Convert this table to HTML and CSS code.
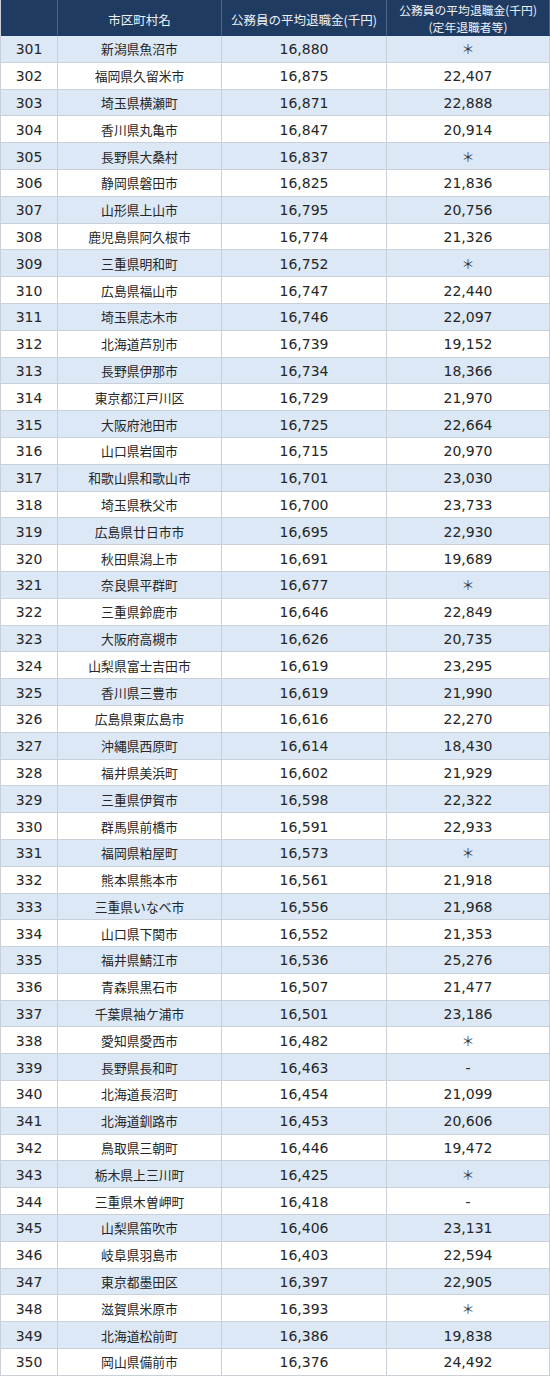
FILE: index.html
```html
<!DOCTYPE html>
<html lang="ja">
<head>
<meta charset="utf-8">
<title>公務員の平均退職金</title>
<link rel="stylesheet" href="styles.css">
</head>
<body>
<div class="table">
  <div class="row head">
    <div class="c"></div>
    <div class="c">市区町村名</div>
    <div class="c">公務員の平均退職金(千円)</div>
    <div class="c two"><span>公務員の平均退職金(千円)</span><span>(定年退職者等)</span></div>
  </div>
  <div class="row"><div class="c n">301</div><div class="c j">新潟県魚沼市</div><div class="c n">16,880</div><div class="c s">＊</div></div>
  <div class="row"><div class="c n">302</div><div class="c j">福岡県久留米市</div><div class="c n">16,875</div><div class="c n">22,407</div></div>
  <div class="row"><div class="c n">303</div><div class="c j">埼玉県横瀬町</div><div class="c n">16,871</div><div class="c n">22,888</div></div>
  <div class="row"><div class="c n">304</div><div class="c j">香川県丸亀市</div><div class="c n">16,847</div><div class="c n">20,914</div></div>
  <div class="row"><div class="c n">305</div><div class="c j">長野県大桑村</div><div class="c n">16,837</div><div class="c s">＊</div></div>
  <div class="row"><div class="c n">306</div><div class="c j">静岡県磐田市</div><div class="c n">16,825</div><div class="c n">21,836</div></div>
  <div class="row"><div class="c n">307</div><div class="c j">山形県上山市</div><div class="c n">16,795</div><div class="c n">20,756</div></div>
  <div class="row"><div class="c n">308</div><div class="c j">鹿児島県阿久根市</div><div class="c n">16,774</div><div class="c n">21,326</div></div>
  <div class="row"><div class="c n">309</div><div class="c j">三重県明和町</div><div class="c n">16,752</div><div class="c s">＊</div></div>
  <div class="row"><div class="c n">310</div><div class="c j">広島県福山市</div><div class="c n">16,747</div><div class="c n">22,440</div></div>
  <div class="row"><div class="c n">311</div><div class="c j">埼玉県志木市</div><div class="c n">16,746</div><div class="c n">22,097</div></div>
  <div class="row"><div class="c n">312</div><div class="c j">北海道芦別市</div><div class="c n">16,739</div><div class="c n">19,152</div></div>
  <div class="row"><div class="c n">313</div><div class="c j">長野県伊那市</div><div class="c n">16,734</div><div class="c n">18,366</div></div>
  <div class="row"><div class="c n">314</div><div class="c j">東京都江戸川区</div><div class="c n">16,729</div><div class="c n">21,970</div></div>
  <div class="row"><div class="c n">315</div><div class="c j">大阪府池田市</div><div class="c n">16,725</div><div class="c n">22,664</div></div>
  <div class="row"><div class="c n">316</div><div class="c j">山口県岩国市</div><div class="c n">16,715</div><div class="c n">20,970</div></div>
  <div class="row"><div class="c n">317</div><div class="c j">和歌山県和歌山市</div><div class="c n">16,701</div><div class="c n">23,030</div></div>
  <div class="row"><div class="c n">318</div><div class="c j">埼玉県秩父市</div><div class="c n">16,700</div><div class="c n">23,733</div></div>
  <div class="row"><div class="c n">319</div><div class="c j">広島県廿日市市</div><div class="c n">16,695</div><div class="c n">22,930</div></div>
  <div class="row"><div class="c n">320</div><div class="c j">秋田県潟上市</div><div class="c n">16,691</div><div class="c n">19,689</div></div>
  <div class="row"><div class="c n">321</div><div class="c j">奈良県平群町</div><div class="c n">16,677</div><div class="c s">＊</div></div>
  <div class="row"><div class="c n">322</div><div class="c j">三重県鈴鹿市</div><div class="c n">16,646</div><div class="c n">22,849</div></div>
  <div class="row"><div class="c n">323</div><div class="c j">大阪府高槻市</div><div class="c n">16,626</div><div class="c n">20,735</div></div>
  <div class="row"><div class="c n">324</div><div class="c j">山梨県富士吉田市</div><div class="c n">16,619</div><div class="c n">23,295</div></div>
  <div class="row"><div class="c n">325</div><div class="c j">香川県三豊市</div><div class="c n">16,619</div><div class="c n">21,990</div></div>
  <div class="row"><div class="c n">326</div><div class="c j">広島県東広島市</div><div class="c n">16,616</div><div class="c n">22,270</div></div>
  <div class="row"><div class="c n">327</div><div class="c j">沖縄県西原町</div><div class="c n">16,614</div><div class="c n">18,430</div></div>
  <div class="row"><div class="c n">328</div><div class="c j">福井県美浜町</div><div class="c n">16,602</div><div class="c n">21,929</div></div>
  <div class="row"><div class="c n">329</div><div class="c j">三重県伊賀市</div><div class="c n">16,598</div><div class="c n">22,322</div></div>
  <div class="row"><div class="c n">330</div><div class="c j">群馬県前橋市</div><div class="c n">16,591</div><div class="c n">22,933</div></div>
  <div class="row"><div class="c n">331</div><div class="c j">福岡県粕屋町</div><div class="c n">16,573</div><div class="c s">＊</div></div>
  <div class="row"><div class="c n">332</div><div class="c j">熊本県熊本市</div><div class="c n">16,561</div><div class="c n">21,918</div></div>
  <div class="row"><div class="c n">333</div><div class="c j">三重県いなべ市</div><div class="c n">16,556</div><div class="c n">21,968</div></div>
  <div class="row"><div class="c n">334</div><div class="c j">山口県下関市</div><div class="c n">16,552</div><div class="c n">21,353</div></div>
  <div class="row"><div class="c n">335</div><div class="c j">福井県鯖江市</div><div class="c n">16,536</div><div class="c n">25,276</div></div>
  <div class="row"><div class="c n">336</div><div class="c j">青森県黒石市</div><div class="c n">16,507</div><div class="c n">21,477</div></div>
  <div class="row"><div class="c n">337</div><div class="c j">千葉県袖ケ浦市</div><div class="c n">16,501</div><div class="c n">23,186</div></div>
  <div class="row"><div class="c n">338</div><div class="c j">愛知県愛西市</div><div class="c n">16,482</div><div class="c s">＊</div></div>
  <div class="row"><div class="c n">339</div><div class="c j">長野県長和町</div><div class="c n">16,463</div><div class="c n">-</div></div>
  <div class="row"><div class="c n">340</div><div class="c j">北海道長沼町</div><div class="c n">16,454</div><div class="c n">21,099</div></div>
  <div class="row"><div class="c n">341</div><div class="c j">北海道釧路市</div><div class="c n">16,453</div><div class="c n">20,606</div></div>
  <div class="row"><div class="c n">342</div><div class="c j">鳥取県三朝町</div><div class="c n">16,446</div><div class="c n">19,472</div></div>
  <div class="row"><div class="c n">343</div><div class="c j">栃木県上三川町</div><div class="c n">16,425</div><div class="c s">＊</div></div>
  <div class="row"><div class="c n">344</div><div class="c j">三重県木曽岬町</div><div class="c n">16,418</div><div class="c n">-</div></div>
  <div class="row"><div class="c n">345</div><div class="c j">山梨県笛吹市</div><div class="c n">16,406</div><div class="c n">23,131</div></div>
  <div class="row"><div class="c n">346</div><div class="c j">岐阜県羽島市</div><div class="c n">16,403</div><div class="c n">22,594</div></div>
  <div class="row"><div class="c n">347</div><div class="c j">東京都墨田区</div><div class="c n">16,397</div><div class="c n">22,905</div></div>
  <div class="row"><div class="c n">348</div><div class="c j">滋賀県米原市</div><div class="c n">16,393</div><div class="c s">＊</div></div>
  <div class="row"><div class="c n">349</div><div class="c j">北海道松前町</div><div class="c n">16,386</div><div class="c n">19,838</div></div>
  <div class="row"><div class="c n">350</div><div class="c j">岡山県備前市</div><div class="c n">16,376</div><div class="c n">24,492</div></div>
</div>
</body>
</html>
```

FILE: styles.css
```css
* { box-sizing: border-box; }
html, body { margin: 0; padding: 0; background: #ffffff; }
body {
  width: 550px;
  font-family: "DejaVu Sans", "Noto Sans CJK JP", sans-serif;
  color: #262626;
}
.table {
  width: 550px;
  height: 1376px;
  display: flex;
  flex-direction: column;
  border-left: 1px solid #c9d0d8;
}
.row {
  flex: 1 1 0;
  display: grid;
  grid-template-columns: 57px 164px 165px 1fr;
  min-height: 0;
}
.row:nth-child(even) { background: #dce8f6; }
.row:nth-child(odd) { background: #ffffff; }
.row.head {
  flex: 0 0 36px;
  background: #1f3b62;
  color: #eef2f7;
  font-family: "Noto Sans CJK JP", sans-serif;
  font-size: 12.5px;
}
.c {
  display: flex;
  align-items: center;
  justify-content: center;
  border-right: 1px solid #c9d0d8;
  border-bottom: 1px solid #c9d0d8;
  white-space: nowrap;
  overflow: hidden;
}
.head .c {
  border-right-color: #4a6283;
  border-bottom-color: #1f3b62;
  padding-top: 3px;
}
.head .c.two {
  flex-direction: column;
  justify-content: flex-start;
  font-size: 11.8px;
  line-height: 17px;
  padding-top: 1px;
}
.n {
  font-size: 14px;
  padding-top: 1px;
}
.j {
  font-family: "Noto Sans CJK JP", sans-serif;
  font-size: 12.8px;
}
.s {
  font-family: "Noto Sans CJK JP", sans-serif;
  font-size: 13px;
  color: #3a3a3a;
}
```
